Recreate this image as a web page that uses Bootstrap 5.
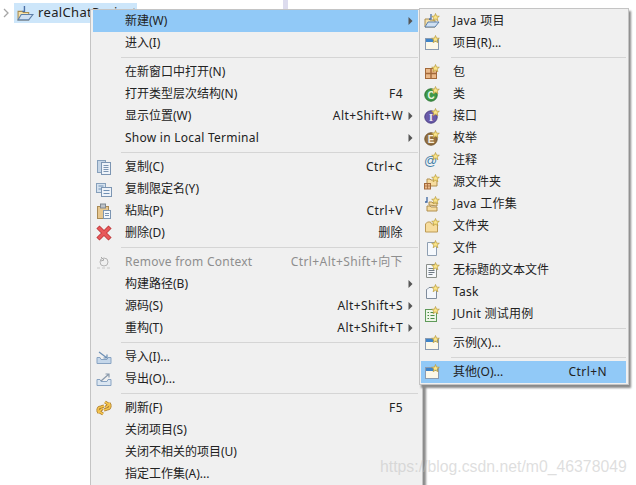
<!DOCTYPE html>
<html lang="zh-CN">
<head>
  <meta charset="UTF-8">
  <meta name="viewport" content="width=device-width, initial-scale=1.0">
  <title>New menu</title>
  <link href="https://cdn.jsdelivr.net/npm/bootstrap@5.3.0/dist/css/bootstrap.min.css" rel="stylesheet">
  <style>
    html, body {
      height: 485px;
      overflow: hidden;
    }

    body {
      background-color: #fff;
      color: #222;
      font-family: "Noto Sans", "Noto Sans CJK SC", sans-serif;
      font-size: 12px;
      position: relative;
    }

    /* project tree behind the menu */
    .tree-row {
      height: 20px;
      margin: 3px 0 0 3px;
    }

    .tree-label {
      width: 123px;
      height: 20px;
      background-color: #cde6fa;
      font-size: 13px;
      letter-spacing: .35px;
      padding-left: 3px;
      margin-left: 5px;
    }

    .tree-label svg {
      margin-right: 4px;
    }

    .pane-edge {
      position: absolute;
      left: 283px;
      top: 0;
      width: 5px;
      height: 9px;
      background-color: #dddcee;
    }

    /* popup menus */
    .ctx-menu.dropdown-menu {
      display: block;
      position: absolute;
      margin: 0;
      min-width: 0;
      padding: 0 4px 0 2px;
      background-color: #f0f0f0;
      border: 1px solid #c4c4c4;
      border-radius: 0;
      font-size: 12px;
      color: #222;
      list-style: none;
    }

    .ctx-main {
      left: 90px;
      top: 9px;
      width: 333px;
      height: 490px;
      box-shadow: 3px 3px 2px #8c8c8c;
    }

    .ctx-sub.dropdown-menu {
      left: 419px;
      top: 8px;
      width: 210px;
      height: 377px;
      padding: 1px 2px 0 1px;
      box-shadow: 2px 3px 2px #8a8a8a;
    }

    .ctx-row.dropdown-item {
      display: flex;
      align-items: center;
      height: 22px;
      padding: 0 0 0 3px;
      color: #222;
      line-height: 22px;
    }

    .ctx-row.row-hot {
      background-color: #91c9f7;
    }

    .ctx-row.row-off {
      color: #8e8e8e;
    }

    .row-icon {
      width: 16px;
      height: 16px;
      margin-right: 13px;
      flex: none;
    }

    .row-key {
      margin-left: auto;
      letter-spacing: .42px;
    }

    .row-latin {
      letter-spacing: .25px;
    }

    .row-arrow {
      flex: none;
      width: 15px;
      display: flex;
      justify-content: flex-end;
      padding-right: 5px;
    }

    .ctx-sub .row-arrow {
      width: 19px;
    }

    .ctx-rule.dropdown-divider {
      margin: 3px 0 3px 28px;
      border-top: 1px solid #d5d5d5;
      opacity: 1;
    }

    .ctx-sub .ctx-rule.dropdown-divider {
      margin-left: 30px;
    }

    .mark-text {
      position: absolute;
      left: 380px;
      top: 457px;
      z-index: 1100;
      font-family: "Liberation Sans", sans-serif;
      font-size: 15.8px;
      line-height: 20px;
      color: rgba(190, 190, 190, .5);
      white-space: nowrap;
    }
  </style>
</head>
<body>

  <svg width="0" height="0" class="position-absolute">
    <defs>
      <symbol id="star" viewBox="0 0 16 16">
        <path d="M11.500 .5l1 2.600 2.800.2-2.200 1.700.8 2.700-2.400-1.500-2.400 1.500.8-2.700-2.200-1.700 2.800-.2z" fill="#fbe58a" stroke="#b89a3a" stroke-width=".7"/>
      </symbol>
      <symbol id="i-jproj" viewBox="0 0 16 16">
        <path d="M1 14V6h4l1 1h5v7z" fill="#f6e2ac" stroke="#a88c52"/>
        <path d="M1 14l3-5h11l-4 5z" fill="#cfe0f2" stroke="#5d7fa8"/>
        <path d="M7 1v5H5" fill="none" stroke="#4a6fa5" stroke-width="1.300"/>
      </symbol>
      <symbol id="i-win" viewBox="0 0 16 16">
        <rect x="1.500" y="3.500" width="13" height="11" fill="#fdf8e8" stroke="#8a9bb0"/>
        <rect x="2" y="4" width="12" height="3" fill="#3f84c9"/>
      </symbol>
      <symbol id="i-pkg" viewBox="0 0 16 16">
        <rect x="1.500" y="4.500" width="11" height="10" fill="#e9b98a" stroke="#a3693a"/>
        <path d="M7 4.500v10M1.500 9.500h11" stroke="#a3693a" stroke-width="1.400"/>
      </symbol>
      <symbol id="i-class" viewBox="0 0 16 16">
        <circle cx="7" cy="9" r="6.200" fill="#3f9a48" stroke="#2a7433"/>
        <text x="7" y="12.600" text-anchor="middle" font-family="Liberation Sans" font-weight="700" font-size="10" fill="#e8f5e0">C</text>
      </symbol>
      <symbol id="i-iface" viewBox="0 0 16 16">
        <circle cx="7" cy="9" r="6.200" fill="#6a5aa8" stroke="#4b3f86"/>
        <text x="7" y="12.600" text-anchor="middle" font-family="Liberation Serif" font-weight="700" font-size="10" fill="#f0edf8">I</text>
      </symbol>
      <symbol id="i-enum" viewBox="0 0 16 16">
        <circle cx="7" cy="9" r="6.200" fill="#94703f" stroke="#72542c"/>
        <text x="7" y="12.600" text-anchor="middle" font-family="Liberation Sans" font-weight="700" font-size="10" fill="#f7efe0">E</text>
      </symbol>
      <symbol id="i-anno" viewBox="0 0 16 16">
        <text x="6.500" y="13" text-anchor="middle" font-family="Liberation Sans" font-size="13" fill="#3f7fa8">@</text>
      </symbol>
      <symbol id="i-src" viewBox="0 0 16 16">
        <path d="M3 11V5h3l1 1h6v6H7" fill="#f6dca0" stroke="#b08f4e"/>
        <rect x=".5" y="9.500" width="6" height="5.500" fill="#e9b98a" stroke="#a3693a"/>
        <path d="M3.500 9.500V15M.5 12h6" stroke="#a3693a" stroke-width=".8"/>
      </symbol>
      <symbol id="i-jset" viewBox="0 0 16 16">
        <path d="M3 1v5H1" fill="none" stroke="#3d66a0" stroke-width="1.300"/>
        <path d="M5 9V6h3l1 1h4v3z" fill="#f6dca0" stroke="#b08f4e"/>
        <path d="M3 15v-5h3l1 1h6v4z" fill="#f6dca0" stroke="#b08f4e"/>
      </symbol>
      <symbol id="i-folder" viewBox="0 0 16 16">
        <path d="M1.500 14V6l2-2h3l1 2h6v8z" fill="#f7dd9e" stroke="#bd9a55"/>
      </symbol>
      <symbol id="i-file" viewBox="0 0 16 16">
        <path d="M3.500 2.500h7l2 2v11h-9z" fill="#f6f9fd" stroke="#8f9fb2"/>
      </symbol>
      <symbol id="i-text" viewBox="0 0 16 16">
        <path d="M2.500 2.500h8l2 2v11h-10z" fill="#f6f8fb" stroke="#8a8f8a"/>
        <path d="M4.500 6.500h6M4.500 8.500h6M4.500 10.500h6M4.500 12.500h4" stroke="#6f7a84"/>
      </symbol>
      <symbol id="i-task" viewBox="0 0 16 16">
        <path d="M3 5.500l2-2h7.500v11h-10v-9z" fill="#f4f7fb" stroke="#7f8c9c"/>
      </symbol>
      <symbol id="i-junit" viewBox="0 0 16 16">
        <rect x="1.500" y="3.500" width="11" height="12" fill="#eef6e8" stroke="#5f9a5a"/>
        <path d="M3.500 6.500h1.500M6.500 6.500h4M3.500 9.500h1.500M6.500 9.500h4M3.500 12.500h1.500M6.500 12.500h4" stroke="#4b8a47"/>
      </symbol>
      <symbol id="i-copy" viewBox="0 0 16 16">
        <rect x="1.500" y="1.500" width="8" height="12" fill="#c5d5e6" stroke="#87a0bb"/>
        <rect x="5.500" y="3.500" width="9" height="12" fill="#eef3f9" stroke="#7c95b2"/>
        <path d="M7.500 6.500h5M7.500 8.500h5M7.500 10.500h5M7.500 12.500h5" stroke="#7c95b2"/>
      </symbol>
      <symbol id="i-copyq" viewBox="0 0 16 16">
        <rect x=".5" y="2.500" width="9" height="9" fill="#d5e2ef" stroke="#87a0bb"/>
        <rect x="5.500" y="6.500" width="10" height="9" fill="#eef3f9" stroke="#7c95b2"/>
        <path d="M2.500 5h5M2.500 8h3M7.500 9.500h6M7.500 12.500h6" stroke="#6f90b4"/>
      </symbol>
      <symbol id="i-paste" viewBox="0 0 16 16">
        <rect x="1.500" y="3.500" width="11" height="12" fill="#e7c78f" stroke="#a98a55"/>
        <rect x="4.500" y="1" width="5" height="4" fill="#bcc2c8" stroke="#7f8790"/>
        <rect x="7.500" y="7.500" width="7" height="8" fill="#f5f8fc" stroke="#7c95b2"/>
        <path d="M9 10.500h4M9 12.500h4" stroke="#7c95b2"/>
      </symbol>
      <symbol id="i-del" viewBox="0 0 16 16">
        <path d="M3.500 3.500l9 9M12.500 3.500l-9 9" stroke="#b93436" stroke-width="4.400" stroke-linecap="square"/>
        <path d="M3.500 3.500l9 9M12.500 3.500l-9 9" stroke="#e8585a" stroke-width="3" stroke-linecap="square"/>
      </symbol>
      <symbol id="i-remove" viewBox="0 0 16 16">
        <path d="M1 14h14" stroke="#c8c8c8" stroke-dasharray="3 2"/>
        <circle cx="8" cy="8" r="4" fill="none" stroke="#b4b4b4"/>
        <path d="M5 3l3 3-3 1" fill="none" stroke="#a8a8a8"/>
      </symbol>
      <symbol id="i-import" viewBox="0 0 16 16">
        <path d="M1 8.500h3l1 2h6l1-2h3v6H1z" fill="#c5d7ea" stroke="#88a3c2"/>
        <path d="M3 3l8 6M11 5.500V9H7.500" fill="none" stroke="#6c8fb5" stroke-width="1.200"/>
      </symbol>
      <symbol id="i-export" viewBox="0 0 16 16">
        <path d="M1 8.500h3l1 2h6l1-2h3v6H1z" fill="#dbe6f1" stroke="#88a3c2"/>
        <path d="M5 10l8-7M9.500 3H13v3.500" fill="none" stroke="#8a9aac" stroke-width="1.200"/>
      </symbol>
      <symbol id="i-refresh" viewBox="0 0 16 16">
        <path d="M3 13C1 10 2 7 5 7l3-1M9 2l4 2.500-3.500 3" fill="none" stroke="#a9792a" stroke-width="3"/>
        <path d="M13 3c2 3 1 6-2 6l-3 1M7 14l-4-2.500 3.500-3" fill="none" stroke="#a9792a" stroke-width="3"/>
        <path d="M3 13C1 10 2 7 5 7l3-1M9 2l4 2.500-3.500 3" fill="none" stroke="#f6c64f" stroke-width="1.600"/>
        <path d="M13 3c2 3 1 6-2 6l-3 1M7 14l-4-2.500 3.500-3" fill="none" stroke="#f6c64f" stroke-width="1.600"/>
      </symbol>
      <symbol id="arrow" viewBox="0 0 5 8">
        <path d="M.5 0L4.500 4 .5 8z" fill="#555"/>
      </symbol>
    </defs>
  </svg>

  <!-- Project tree -->
  <div class="tree-row d-flex align-items-center">
    <svg width="6" height="10" viewBox="0 0 6 10"><path d="M1 1l4 4-4 4" fill="none" stroke="#a6a6a6" stroke-width="1.300"/></svg>
    <div class="tree-label d-flex align-items-center">
      <svg class="flex-shrink-0" width="17" height="17"><use href="#i-jproj"/></svg>
      <span>realChatProject</span>
    </div>
  </div>
  <div class="pane-edge"></div>

  <!-- Main context menu -->
  <ul class="dropdown-menu ctx-menu ctx-main">
    <li><a class="dropdown-item ctx-row row-hot" href="#"><span class="row-icon"></span>新建(W)<span class="row-arrow ms-auto"><svg width="5" height="8"><use href="#arrow"/></svg></span></a></li>
    <li><a class="dropdown-item ctx-row" href="#"><span class="row-icon"></span>进入(I)</a></li>
    <li><hr class="dropdown-divider ctx-rule"></li>
    <li><a class="dropdown-item ctx-row" href="#"><span class="row-icon"></span>在新窗口中打开(N)</a></li>
    <li><a class="dropdown-item ctx-row" href="#"><span class="row-icon"></span>打开类型层次结构(N)<span class="row-key">F4</span><span class="row-arrow"></span></a></li>
    <li><a class="dropdown-item ctx-row" href="#"><span class="row-icon"></span>显示位置(W)<span class="row-key">Alt+Shift+W</span><span class="row-arrow"><svg width="5" height="8"><use href="#arrow"/></svg></span></a></li>
    <li><a class="dropdown-item ctx-row" href="#"><span class="row-icon"></span><span class="row-latin">Show in Local Terminal</span><span class="row-arrow ms-auto"><svg width="5" height="8"><use href="#arrow"/></svg></span></a></li>
    <li><hr class="dropdown-divider ctx-rule"></li>
    <li><a class="dropdown-item ctx-row" href="#"><svg class="row-icon"><use href="#i-copy"/></svg>复制(C)<span class="row-key">Ctrl+C</span><span class="row-arrow"></span></a></li>
    <li><a class="dropdown-item ctx-row" href="#"><svg class="row-icon"><use href="#i-copyq"/></svg>复制限定名(Y)</a></li>
    <li><a class="dropdown-item ctx-row" href="#"><svg class="row-icon"><use href="#i-paste"/></svg>粘贴(P)<span class="row-key">Ctrl+V</span><span class="row-arrow"></span></a></li>
    <li><a class="dropdown-item ctx-row" href="#"><svg class="row-icon"><use href="#i-del"/></svg>删除(D)<span class="row-key">删除</span><span class="row-arrow"></span></a></li>
    <li><hr class="dropdown-divider ctx-rule"></li>
    <li><a class="dropdown-item ctx-row row-off" href="#"><svg class="row-icon"><use href="#i-remove"/></svg><span class="row-latin">Remove from Context</span><span class="row-key">Ctrl+Alt+Shift+向下</span><span class="row-arrow"></span></a></li>
    <li><a class="dropdown-item ctx-row" href="#"><span class="row-icon"></span>构建路径(B)<span class="row-arrow ms-auto"><svg width="5" height="8"><use href="#arrow"/></svg></span></a></li>
    <li><a class="dropdown-item ctx-row" href="#"><span class="row-icon"></span>源码(S)<span class="row-key">Alt+Shift+S</span><span class="row-arrow"><svg width="5" height="8"><use href="#arrow"/></svg></span></a></li>
    <li><a class="dropdown-item ctx-row" href="#"><span class="row-icon"></span>重构(T)<span class="row-key">Alt+Shift+T</span><span class="row-arrow"><svg width="5" height="8"><use href="#arrow"/></svg></span></a></li>
    <li><hr class="dropdown-divider ctx-rule"></li>
    <li><a class="dropdown-item ctx-row" href="#"><svg class="row-icon"><use href="#i-import"/></svg>导入(I)...</a></li>
    <li><a class="dropdown-item ctx-row" href="#"><svg class="row-icon"><use href="#i-export"/></svg>导出(O)...</a></li>
    <li><hr class="dropdown-divider ctx-rule"></li>
    <li><a class="dropdown-item ctx-row" href="#"><svg class="row-icon"><use href="#i-refresh"/></svg>刷新(F)<span class="row-key">F5</span><span class="row-arrow"></span></a></li>
    <li><a class="dropdown-item ctx-row" href="#"><span class="row-icon"></span>关闭项目(S)</a></li>
    <li><a class="dropdown-item ctx-row" href="#"><span class="row-icon"></span>关闭不相关的项目(U)</a></li>
    <li><a class="dropdown-item ctx-row" href="#"><span class="row-icon"></span>指定工作集(A)...</a></li>
  </ul>

  <!-- New submenu -->
  <ul class="dropdown-menu ctx-menu ctx-sub">
    <li><a class="dropdown-item ctx-row" href="#"><svg class="row-icon"><use href="#i-jproj"/><use href="#star"/></svg><span class="row-latin">Java 项目</span></a></li>
    <li><a class="dropdown-item ctx-row" href="#"><svg class="row-icon"><use href="#i-win"/><use href="#star"/></svg>项目(R)...</a></li>
    <li><hr class="dropdown-divider ctx-rule"></li>
    <li><a class="dropdown-item ctx-row" href="#"><svg class="row-icon"><use href="#i-pkg"/><use href="#star"/></svg>包</a></li>
    <li><a class="dropdown-item ctx-row" href="#"><svg class="row-icon"><use href="#i-class"/><use href="#star"/></svg>类</a></li>
    <li><a class="dropdown-item ctx-row" href="#"><svg class="row-icon"><use href="#i-iface"/><use href="#star"/></svg>接口</a></li>
    <li><a class="dropdown-item ctx-row" href="#"><svg class="row-icon"><use href="#i-enum"/><use href="#star"/></svg>枚举</a></li>
    <li><a class="dropdown-item ctx-row" href="#"><svg class="row-icon"><use href="#i-anno"/><use href="#star"/></svg>注释</a></li>
    <li><a class="dropdown-item ctx-row" href="#"><svg class="row-icon"><use href="#i-src"/><use href="#star"/></svg>源文件夹</a></li>
    <li><a class="dropdown-item ctx-row" href="#"><svg class="row-icon"><use href="#i-jset"/><use href="#star"/></svg><span class="row-latin">Java 工作集</span></a></li>
    <li><a class="dropdown-item ctx-row" href="#"><svg class="row-icon"><use href="#i-folder"/><use href="#star"/></svg>文件夹</a></li>
    <li><a class="dropdown-item ctx-row" href="#"><svg class="row-icon"><use href="#i-file"/><use href="#star"/></svg>文件</a></li>
    <li><a class="dropdown-item ctx-row" href="#"><svg class="row-icon"><use href="#i-text"/><use href="#star"/></svg>无标题的文本文件</a></li>
    <li><a class="dropdown-item ctx-row" href="#"><svg class="row-icon"><use href="#i-task"/><use href="#star"/></svg><span class="row-latin">Task</span></a></li>
    <li><a class="dropdown-item ctx-row" href="#"><svg class="row-icon"><use href="#i-junit"/><use href="#star"/></svg><span class="row-latin">JUnit 测试用例</span></a></li>
    <li><hr class="dropdown-divider ctx-rule"></li>
    <li><a class="dropdown-item ctx-row" href="#"><svg class="row-icon"><use href="#i-win"/><use href="#star"/></svg>示例(X)...</a></li>
    <li><hr class="dropdown-divider ctx-rule"></li>
    <li><a class="dropdown-item ctx-row row-hot" href="#"><svg class="row-icon"><use href="#i-win"/><use href="#star"/></svg>其他(O)...<span class="row-key">Ctrl+N</span><span class="row-arrow"></span></a></li>
  </ul>

  <div class="mark-text">https://blog.csdn.net/m0_46378049</div>

  <script src="https://cdn.jsdelivr.net/npm/bootstrap@5.3.0/dist/js/bootstrap.bundle.min.js"></script>
</body>
</html>
